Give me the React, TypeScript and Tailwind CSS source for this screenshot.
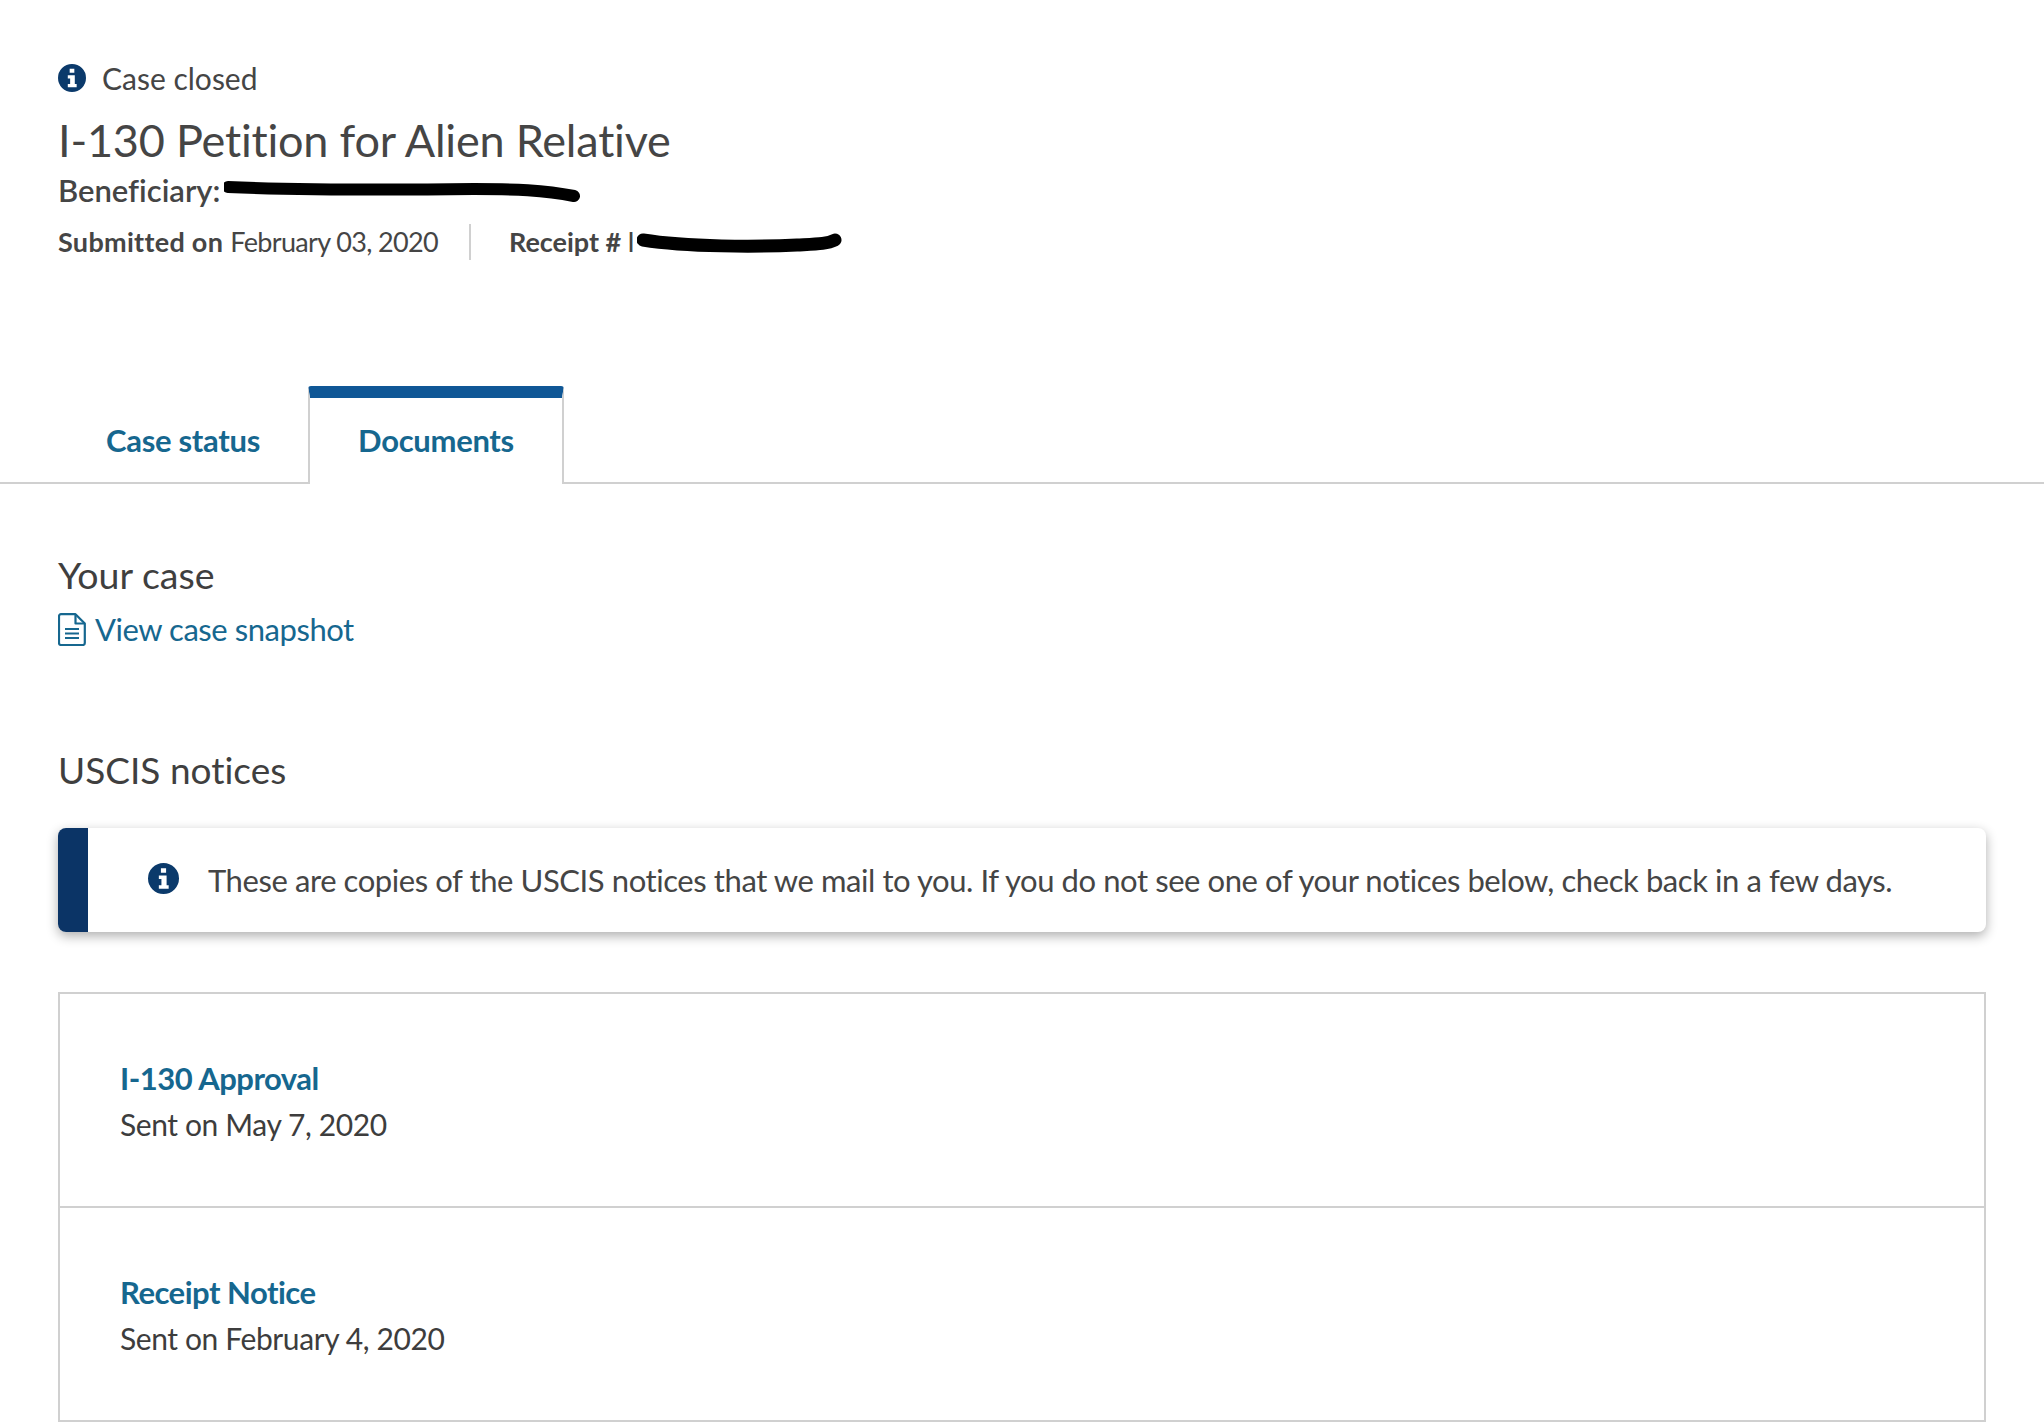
const font = { fontFamily: '"Lato", "Noto Sans", sans-serif', fontVariantLigatures: 'none' }

function InfoIcon({ className }: { className: string }) {
  return (
    <svg viewBox="0 0 30 30" className={className}>
      <path
        fill="#0b3a6b"
        fillRule="evenodd"
        d="M15 0a15 15 0 1 0 0 30a15 15 0 0 0 0-30ZM12.5 5h5v4.5h-5ZM10.5 12h7.5v9.5h2V25h-9.5v-3.5h2.5v-6h-2.5Z"
      />
    </svg>
  )
}

function FileIcon() {
  return (
    <svg viewBox="0 0 28 33" className="w-[28px] h-[33px] shrink-0" fill="none" stroke="#16678f" strokeWidth="2.2">
      <path d="M3 1.2h14.5l9.3 9.3v19.5a2 2 0 0 1-2 2H3a2 2 0 0 1-2-2V3.2a2 2 0 0 1 2-2Z" strokeLinejoin="round" />
      <path d="M17.5 1.2v9.3h9.3" strokeLinejoin="round" />
      <path d="M7 16h14M7 20.5h14M7 25h14" />
    </svg>
  )
}

function NoticeRow({ title, sent, height }: { title: string; sent: string; height: string }) {
  return (
    <div className={`${height} px-[60px] pt-[62px] border-b-2 border-[#d0d0d0] last:border-b-0`}>
      <a className="block text-[31px] leading-[45px] font-bold tracking-[-0.5px] text-[#16678f]">{title}</a>
      <p className="text-[30px] leading-[46px] tracking-[-0.4px] text-[#3d3d3d]">{sent}</p>
    </div>
  )
}

export default function App() {
  return (
    <div style={font} className="w-[2044px] h-[1426px] overflow-hidden bg-white text-[#454545]">
      {/* case header */}
      <header className="pl-[58px] pt-[59px] h-[386px]">
        <div className="flex items-center gap-[16px] h-[38px]">
          <InfoIcon className="w-[28px] h-[30px]" />
          <span className="text-[30px] leading-[38px]">Case closed</span>
        </div>
        <h1 className="mt-[11px] text-[45px] leading-[64px] tracking-[-0.2px] font-normal">I-130 Petition for Alien Relative</h1>
        <div className="flex items-center h-[36px] text-[31px] leading-[36px] font-semibold">
          <span>Beneficiary:</span>
          <svg width="360" height="30" viewBox="0 0 360 30" className="ml-[4px] shrink-0">
            <path d="M4 12 C80 15 160 15 250 14 C290 14 320 15 350 21" stroke="#000" strokeWidth="12" strokeLinecap="round" fill="none" />
          </svg>
        </div>
        <div className="mt-[14px] flex items-center h-[40px] text-[27px] leading-[40px]">
          <b className="font-bold tracking-[0.3px]">Submitted on</b>
          <span className="ml-[7px] tracking-[-0.65px]">February 03, 2020</span>
          <span className="ml-[31px] mr-[38px] h-[36px] border-l-2 border-[#d0d0d0]" />
          <span className="font-bold">Receipt # </span>
          <span className="ml-[6px]">I</span>
          <svg width="206" height="30" viewBox="0 0 206 30" className="ml-[2px] shrink-0">
            <path d="M6 13 C50 20 120 20 160 18 C180 17 190 17 198 13" stroke="#000" strokeWidth="13" strokeLinecap="round" fill="none" />
          </svg>
        </div>
      </header>

      {/* tabs */}
      <nav className="flex h-[98px] border-b-2 border-[#d0d0d0] pl-[58px]">
        <div className="w-[250px] pl-[48px] pt-[32px] text-[31px] leading-[44px] font-bold tracking-[-0.3px] text-[#16678f]">Case status</div>
        <div className="w-[256px] h-[98px] bg-white border-x-2 border-[#d0d0d0] border-t-[12px] border-t-[#0f5796] rounded-t-[3px] text-center pt-[20px] text-[31px] leading-[44px] font-bold tracking-[-0.3px] text-[#16678f]">
          Documents
        </div>
      </nav>

      <main className="px-[58px]">
        <h2 className="mt-[68px] text-[37.5px] leading-[46px] font-normal text-[#3f3f3f]">Your case</h2>
        <a className="mt-[8px] flex items-center gap-[9px] h-[46px] text-[31px] tracking-[-0.45px] text-[#16678f]">
          <FileIcon />
          View case snapshot
        </a>

        <h2 className="mt-[95px] text-[37px] leading-[46px] font-normal text-[#3f3f3f]">USCIS notices</h2>

        <div className="mt-[35px] flex h-[104px] rounded-[8px] bg-white overflow-hidden shadow-[0_4px_12px_rgba(0,0,0,0.32)]">
          <div className="w-[30px] bg-[#0b3466]" />
          <div className="flex items-center pl-[60px]">
            <InfoIcon className="w-[31px] h-[31px] -mt-[3px]" />
            <p className="ml-[29px] text-[31px] leading-[44px] tracking-[-0.42px] text-[#454545]">
              These are copies of the USCIS notices that we mail to you. If you do not see one of your notices below, check back in a few days.
            </p>
          </div>
        </div>

        <section className="mt-[60px] border-2 border-[#d0d0d0]">
          <NoticeRow title="I-130 Approval" sent="Sent on May 7, 2020" height="h-[214px]" />
          <NoticeRow title="Receipt Notice" sent="Sent on February 4, 2020" height="h-[212px]" />
        </section>
      </main>
    </div>
  )
}
